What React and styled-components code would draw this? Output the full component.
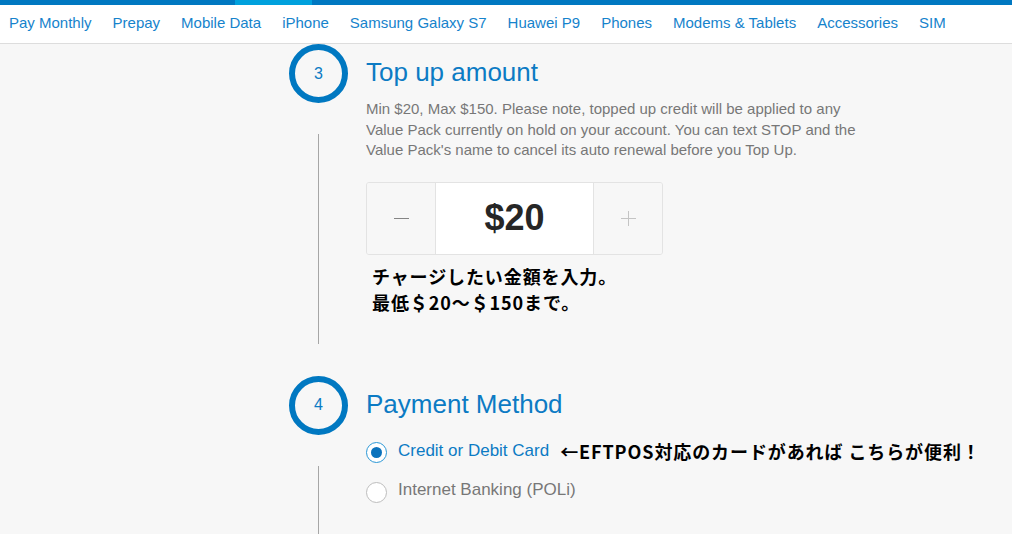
import React from "react";
import styled, { createGlobalStyle } from "styled-components";

const COLORS = {
  brand: "#0078c1",
  brandLight: "#00a1dd",
  link: "#1683cc",
  title: "#0c7bc4",
  text: "#777777",
  rule: "#dddddd",
  rail: "#a6a6a6",
  page: "#f7f7f7",
};

const NAV_ITEMS = [
  "Pay Monthly",
  "Prepay",
  "Mobile Data",
  "iPhone",
  "Samsung Galaxy S7",
  "Huawei P9",
  "Phones",
  "Modems & Tablets",
  "Accessories",
  "SIM",
];

const GlobalStyle = createGlobalStyle`
  html, body {
    margin: 0;
    padding: 0;
    background: ${COLORS.page};
    font-family: "Liberation Sans", Arial, sans-serif;
    overflow: hidden;
  }
  * {
    box-sizing: border-box;
  }
`;

const MinusIcon = () => (
  <svg width="15" height="15" viewBox="0 0 15 15">
    <path d="M0 7.5h15" stroke="#858585" strokeWidth="1.2" />
  </svg>
);

const PlusIcon = () => (
  <svg width="15" height="15" viewBox="0 0 15 15">
    <path d="M0 7.5h15M7.5 0v15" stroke="#c4c4c4" strokeWidth="1" />
  </svg>
);

const Step = ({ number, title, tail, children }) => (
  <StepRow>
    <Rail>
      <Badge>{number}</Badge>
      <RailLine />
    </Rail>
    <StepBody $tail={tail}>
      <StepTitle>{title}</StepTitle>
      {children}
    </StepBody>
  </StepRow>
);

const App = () => {
  const [amount, setAmount] = React.useState(20);
  const [method, setMethod] = React.useState("card");

  return (
    <>
      <GlobalStyle />
      <TopBar>
        <ActiveSegment />
      </TopBar>
      <Nav>
        {NAV_ITEMS.map((item) => (
          <NavLink key={item} href="#">
            {item}
          </NavLink>
        ))}
      </Nav>

      <Main>
        <Step number={3} title="Top up amount">
          <Description>
            Min $20, Max $150. Please note, topped up credit will be applied to
            any Value Pack currently on hold on your account. You can text STOP
            and the Value Pack's name to cancel its auto renewal before you Top
            Up.
          </Description>
          <Stepper>
            <StepButton onClick={() => setAmount((a) => Math.max(20, a - 5))}>
              <MinusIcon />
            </StepButton>
            <Amount>${amount}</Amount>
            <StepButton onClick={() => setAmount((a) => Math.min(150, a + 5))}>
              <PlusIcon />
            </StepButton>
          </Stepper>
          <Note $indent>
            チャージしたい金額を入力。
            <br />
            最低＄20～＄150まで。
          </Note>
        </Step>

        <Step number={4} title="Payment Method" tail>
          <Options>
            <Option $active={method === "card"}>
              <Radio
                $checked={method === "card"}
                onClick={() => setMethod("card")}
              />
              <span>Credit or Debit Card</span>
              <Note>←EFTPOS対応のカードがあれば こちらが便利！</Note>
            </Option>
            <Option $active={method === "poli"}>
              <Radio
                $checked={method === "poli"}
                onClick={() => setMethod("poli")}
              />
              <span>Internet Banking (POLi)</span>
            </Option>
          </Options>
        </Step>
      </Main>
    </>
  );
};

const TopBar = styled.div`
  height: 5px;
  background: ${COLORS.brand};
  display: flex;
`;

const ActiveSegment = styled.div`
  margin-left: 235px;
  width: 77px;
  background: ${COLORS.brandLight};
`;

const Nav = styled.nav`
  display: flex;
  gap: 21px;
  height: 39px;
  padding-left: 9px;
  background: #ffffff;
  border-bottom: 1px solid ${COLORS.rule};
`;

const NavLink = styled.a`
  font-size: 15px;
  line-height: 36px;
  color: ${COLORS.link};
  text-decoration: none;
  white-space: nowrap;
`;

const Main = styled.main`
  padding-left: 289px;
`;

const StepRow = styled.section`
  display: flex;

  & + & {
    margin-top: 32px;
  }
`;

const Rail = styled.div`
  display: flex;
  flex-direction: column;
  align-items: center;
  width: 59px;
  flex-shrink: 0;
`;

const Badge = styled.div`
  width: 59px;
  height: 59px;
  border: 6px solid ${COLORS.brand};
  border-radius: 50%;
  display: flex;
  align-items: center;
  justify-content: center;
  font-size: 16px;
  color: ${COLORS.title};
`;

const RailLine = styled.div`
  flex: 1;
  width: 1px;
  margin-top: 31px;
  background: ${COLORS.rail};
`;

const StepBody = styled.div`
  padding: 0 0 ${(p) => (p.$tail ? "40px" : "29px")} 18px;
`;

const StepTitle = styled.h2`
  margin: 13px 0 0;
  font-size: 26px;
  line-height: 30px;
  font-weight: 400;
  color: ${COLORS.title};
`;

const Description = styled.p`
  margin: 12px 0 0;
  width: 500px;
  font-size: 15px;
  line-height: 20.5px;
  color: ${COLORS.text};
`;

const Stepper = styled.div`
  margin-top: 21px;
  display: grid;
  grid-template-columns: 68px 1fr 68px;
  width: 297px;
  height: 73px;
  border: 1px solid #e3e3e3;
  border-radius: 3px;
  overflow: hidden;
`;

const StepButton = styled.button`
  display: flex;
  align-items: center;
  justify-content: center;
  border: 0;
  padding: 0;
  background: ${COLORS.page};
  cursor: pointer;
`;

const Amount = styled.div`
  display: flex;
  align-items: center;
  justify-content: center;
  background: #ffffff;
  border-left: 1px solid #e3e3e3;
  border-right: 1px solid #e3e3e3;
  font-size: 36px;
  font-weight: 700;
  color: #262626;
`;

const Note = styled.div`
  margin-top: ${(p) => (p.$indent ? "8px" : "0")};
  padding-left: ${(p) => (p.$indent ? "6px" : "0")};
  font-family: "Noto Sans CJK JP", "Liberation Sans", sans-serif;
  font-size: 18px;
  line-height: 26px;
  font-weight: 700;
  letter-spacing: 0.9px;
  color: #000000;
  white-space: nowrap;
`;

const Options = styled.div`
  margin-top: 19px;
  display: flex;
  flex-direction: column;
  gap: 14px;
`;

const Option = styled.label`
  display: flex;
  align-items: center;
  gap: 11px;
  font-size: 17px;
  line-height: 22px;
  color: ${(p) => (p.$active ? COLORS.title : COLORS.text)};
  white-space: nowrap;
  cursor: pointer;
`;

const Radio = styled.span`
  width: 21px;
  height: 21px;
  margin-top: 4px;
  flex-shrink: 0;
  border-radius: 50%;
  border: 1px solid ${(p) => (p.$checked ? "#2a97d6" : "#bdbdbd")};
  background: #ffffff;
  display: flex;
  align-items: center;
  justify-content: center;

  &::after {
    content: "";
    width: 11px;
    height: 11px;
    border-radius: 50%;
    background: #0a72bc;
    display: ${(p) => (p.$checked ? "block" : "none")};
  }
`;

export default App;
